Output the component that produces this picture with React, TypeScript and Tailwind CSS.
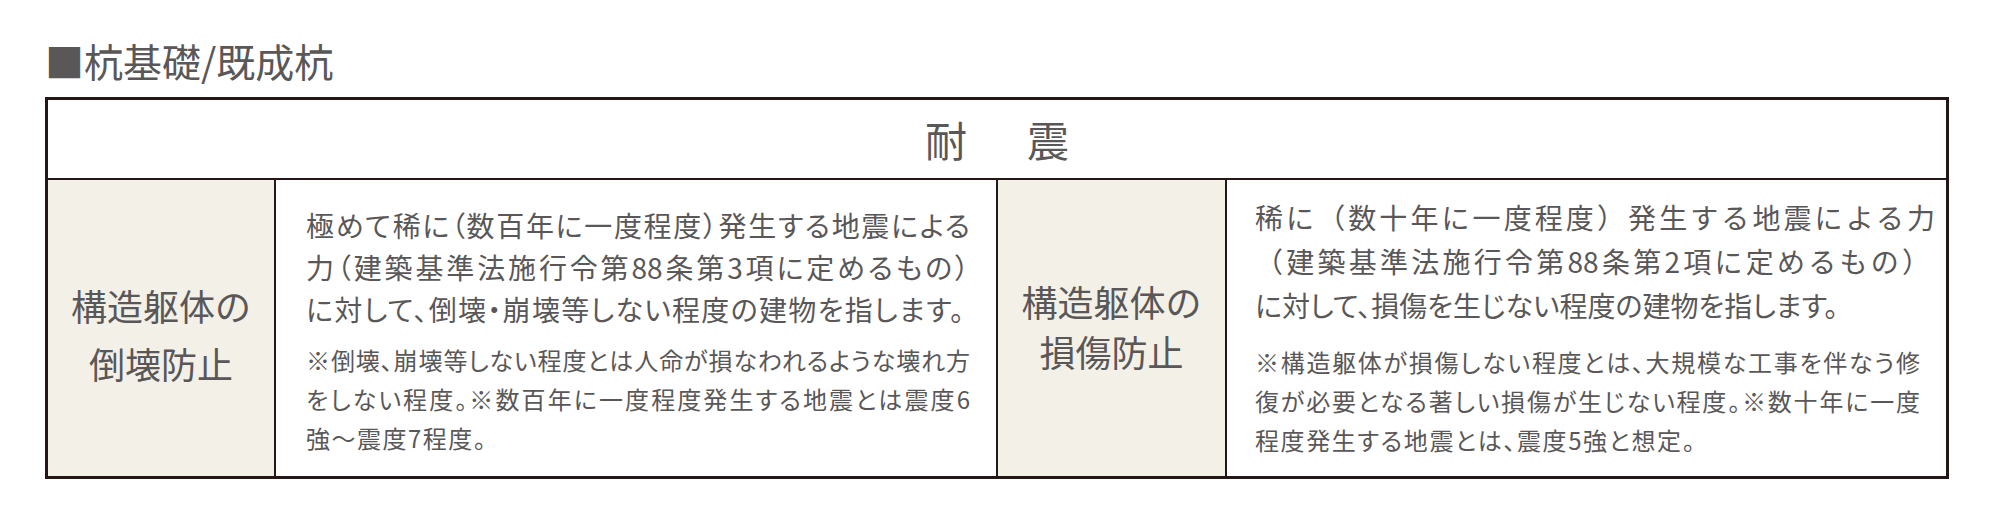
const font = "font-['Noto_Sans_CJK_JP','Noto_Sans',sans-serif]";

// one line of a justified paragraph; w = the width it is stretched to
function JLine({ text, w, palt = true, extra = "" }: { text: string; w?: number; palt?: boolean; extra?: string }) {
  const p = palt ? "[font-feature-settings:'palt']" : "";
  if (!w) return <div className={`whitespace-nowrap ${p} ${extra}`}>{text}</div>;
  return (
    <div className={`whitespace-nowrap text-justify [text-align-last:justify] ${p}`} style={{ width: w }}>
      {text}
    </div>
  );
}

export default function App() {
  return (
    <div className={`${font} bg-white w-[2000px] h-[520px] pl-[45px] pt-[38px] text-[#595757]`}>
      <h2 className="text-[39px] leading-[44px] mb-[15px]">■杭基礎/既成杭</h2>

      <div className="w-[1904px] border-[3px] border-[#231815]">
        <div className="h-[80px] border-b-2 border-[#231815] flex items-center justify-center text-[42px] gap-[60px] pb-[2px]">
          <span>耐</span>
          <span>震</span>
        </div>

        <div className="grid grid-cols-[228px_722px_229px_719px] h-[296px]">
          <div className="bg-[#f3f0e8] border-r-2 border-[#231815] flex flex-col items-center justify-center pt-[12px] text-[36px] leading-[58px]">
            <div>構造躯体の</div>
            <div>倒壊防止</div>
          </div>

          <div className="border-r-2 border-[#231815] pl-[30px] pt-[24px]">
            <div className="text-[28px] leading-[42px]">
              <JLine text="極めて稀に（数百年に一度程度）発生する地震による" w={664} />
              <JLine text="力（建築基準法施行令第88条第3項に定めるもの）" w={663} />
              <JLine text="に対して、倒壊・崩壊等しない程度の建物を指します。" w={658} />
            </div>
            <div className="mt-[10px] text-[24px] leading-[39px]">
              <JLine text="※倒壊、崩壊等しない程度とは人命が損なわれるような壊れ方" w={664} />
              <JLine text="をしない程度。※数百年に一度程度発生する地震とは震度6" w={664} />
              <JLine text="強～震度7程度。" extra="tracking-[1.5px]" />
            </div>
          </div>

          <div className="bg-[#f3f0e8] border-r-2 border-[#231815] flex flex-col items-center justify-center pb-[4px] text-[36px] leading-[50px]">
            <div>構造躯体の</div>
            <div>損傷防止</div>
          </div>

          <div className="pl-[28px] pt-[15px]">
            <div className="text-[28px] leading-[44px]">
              <JLine text="稀に（数十年に一度程度）発生する地震による力" w={680} palt={false} />
              <JLine text="（建築基準法施行令第88条第2項に定めるもの）" w={675} palt={false} />
              <JLine text="に対して、損傷を生じない程度の建物を指します。" />
            </div>
            <div className="mt-[15px] text-[24px] leading-[39px]">
              <JLine text="※構造躯体が損傷しない程度とは、大規模な工事を伴なう修" w={665} />
              <JLine text="復が必要となる著しい損傷が生じない程度。※数十年に一度" w={665} />
              <JLine text="程度発生する地震とは、震度5強と想定。" extra="tracking-[1.6px]" />
            </div>
          </div>
        </div>
      </div>
    </div>
  );
}
